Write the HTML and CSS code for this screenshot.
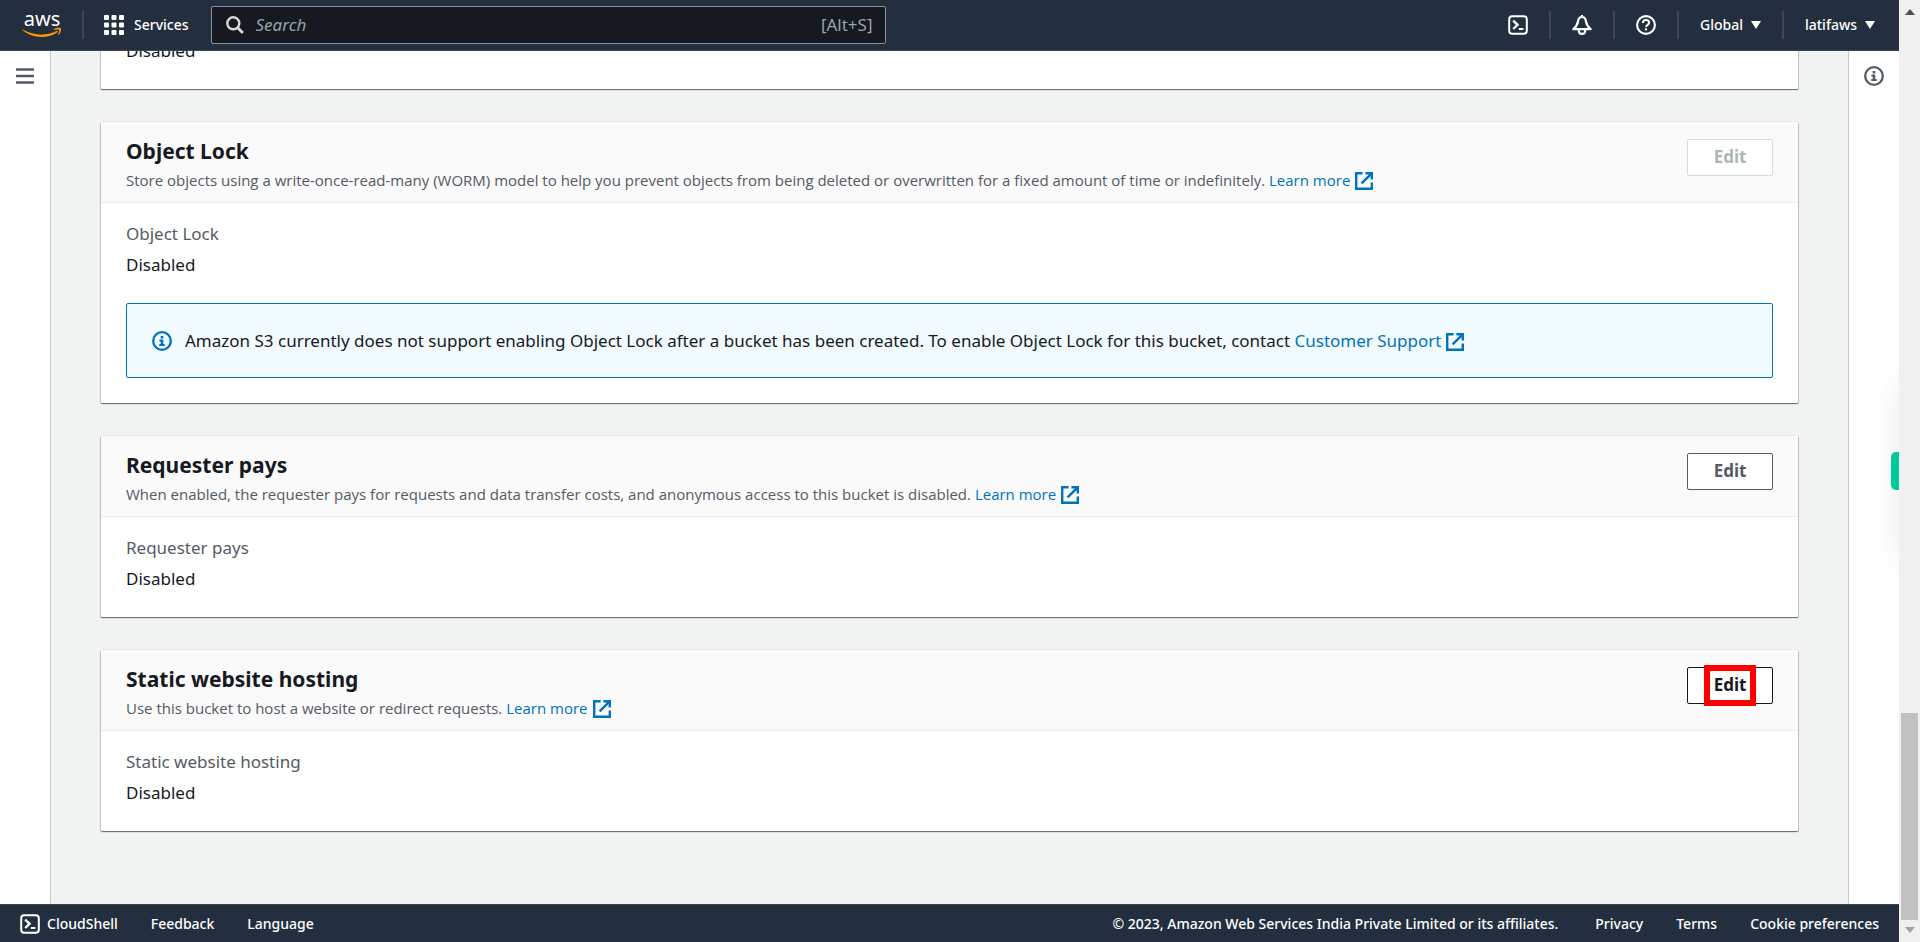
FILE: index.html
```
<!DOCTYPE html>
<html lang="en">
<head>
<meta charset="utf-8">
<title>S3 bucket properties</title>
<link rel="stylesheet" href="styles.css">
</head>
<body>
<svg class="sprite" aria-hidden="true">
  <symbol id="i-shell" viewBox="0 0 20 20"><rect x="1.2" y="1.2" width="17.6" height="17.6" rx="3" fill="none" stroke="currentColor" stroke-width="2"/><path d="M5.2 5.600 9.600 9.800 5.200 14" fill="none" stroke="currentColor" stroke-width="2.300"/><path d="M10.800 14h4.600" stroke="currentColor" stroke-width="2"/></symbol>
  <symbol id="i-ext" viewBox="0 0 18 18"><path d="M7.600 1.200H1.200v15.600h15.600v-6.200M10.400 1.200h6.400v6.400M16.200 1.800 6.600 11.400" fill="none" stroke="currentColor" stroke-width="2.400"/></symbol>
  <symbol id="i-info" viewBox="0 0 20 20"><circle cx="10" cy="10" r="8.800" fill="none" stroke="currentColor" stroke-width="2.300"/><path d="M8.700 5h2.600v2.400H8.700zM7.400 8.500h3.900v4.400h1.400v2H7.300v-2h1.400v-2.400H7.400z" fill="currentColor"/></symbol>
  <symbol id="i-caret" viewBox="0 0 10 8"><path d="M0 0h10L5 8z" fill="currentColor"/></symbol>
</svg>
<div class="app">
  <header class="topbar">
    <a class="logo" href="#" aria-label="AWS home">
      <svg width="40" height="28" viewBox="0 0 40 28"><text class="logo-text" x="20" y="15" text-anchor="middle">aws</text><path d="M.8 18.500c10.600 6.300 23 6.800 34 1.600.9-.4 1.600.6.8 1.200C26.500 27.800 10.500 28.200.4 19.100c-.4-.4 0-.9.4-.6z" fill="#f90"/><path d="M32.200 17.900c2.300-1.500 6.300-1.100 6.700-.5.500.6-.1 4.700-2.300 6.500-.4.300-.7.100-.5-.2.500-1.300 1.600-4 1.100-4.700-.5-.7-3.400-.3-4.700-.1-.4 0-.6-.7-.3-1z" fill="#f90"/></svg>
    </a>
    <span class="rule"></span>
    <button class="nav services"><svg width="20" height="20" viewBox="0 0 20 20" fill="currentColor"><rect width="5" height="5" rx="1"/><rect x="7.500" width="5" height="5" rx="1"/><rect x="15" width="5" height="5" rx="1"/><rect y="7.500" width="5" height="5" rx="1"/><rect x="7.500" y="7.500" width="5" height="5" rx="1"/><rect x="15" y="7.500" width="5" height="5" rx="1"/><rect y="15" width="5" height="5" rx="1"/><rect x="7.500" y="15" width="5" height="5" rx="1"/><rect x="15" y="15" width="5" height="5" rx="1"/></svg>Services</button>
    <label class="search">
      <svg width="18" height="18" viewBox="0 0 18 18" fill="none" stroke="#d5dbdb"><circle cx="7.300" cy="7.300" r="6" stroke-width="2.400"/><path d="m11.700 11.700 5.200 5.200" stroke-width="2.800"/></svg>
      <input type="search" placeholder="Search" aria-label="Search">
      <span>[Alt+S]</span>
    </label>
    <div class="tools">
      <button class="nav" aria-label="CloudShell"><svg width="20" height="20"><use href="#i-shell"/></svg></button>
      <span class="rule"></span>
      <button class="nav" aria-label="Notifications"><svg width="20" height="20" viewBox="0 0 20 20" fill="none" stroke="currentColor" stroke-width="2.200" stroke-linejoin="round"><path d="M10 2C7.500 2 6.300 4.200 6 6.500c-.4 3.300-2 5.300-4.700 7.700h17.400C16 11.800 14.400 9.800 14 6.500 13.700 4.200 12.500 2 10 2z"/><path d="M6.900 15v1.300c0 1.500 1.300 2.600 3.100 2.600s3.100-1.100 3.100-2.600V15M10 0v2"/></svg></button>
      <span class="rule"></span>
      <button class="nav" aria-label="Help"><svg width="20" height="20" viewBox="0 0 20 20" fill="none" stroke="currentColor"><circle cx="10" cy="10" r="8.900" stroke-width="2.100"/><path d="M6.900 8c0-1.900 1.300-3 3.100-3s3.100 1.100 3.100 2.700c0 2.100-3 2.200-3 4.300" stroke-width="2"/><path d="M10 13.300v2.100" stroke-width="2.200"/></svg></button>
      <span class="rule"></span>
      <button class="nav text">Global<svg width="10" height="8"><use href="#i-caret"/></svg></button>
      <span class="rule"></span>
      <button class="nav text">latifaws<svg width="10" height="8"><use href="#i-caret"/></svg></button>
    </div>
  </header>

  <div class="middle">
    <nav class="rail"><button class="rail-button" aria-label="Open navigation"><svg width="18" height="16" viewBox="0 0 18 16" stroke="currentColor" stroke-width="2.400"><path d="M0 1.500h18M0 8h18M0 14.500h18"/></svg></button></nav>
    <main class="content">
      <section class="panel">
        <p class="value">Disabled</p>
      </section>
      <section class="panel">
        <div class="panel-head">
          <div><h2>Object Lock</h2>
          <p>Store objects using a write-once-read-many (WORM) model to help you prevent objects from being deleted or overwritten for a fixed amount of time or indefinitely. <a href="#">Learn more<svg width="18" height="18"><use href="#i-ext"/></svg></a></p></div>
          <button class="edit" disabled>Edit</button>
        </div>
        <dl class="fields"><dt>Object Lock</dt><dd>Disabled</dd></dl>
        <div class="alert"><svg width="20" height="20"><use href="#i-info"/></svg>
          <p>Amazon S3 currently does not support enabling Object Lock after a bucket has been created. To enable Object Lock for this bucket, contact <a href="#">Customer Support<svg width="18" height="18"><use href="#i-ext"/></svg></a></p></div>
      </section>
      <section class="panel">
        <div class="panel-head">
          <div><h2>Requester pays</h2>
          <p>When enabled, the requester pays for requests and data transfer costs, and anonymous access to this bucket is disabled. <a href="#">Learn more<svg width="18" height="18"><use href="#i-ext"/></svg></a></p></div>
          <button class="edit">Edit</button>
        </div>
        <dl class="fields"><dt>Requester pays</dt><dd>Disabled</dd></dl>
      </section>
      <section class="panel">
        <div class="panel-head">
          <div><h2>Static website hosting</h2>
          <p>Use this bucket to host a website or redirect requests. <a href="#">Learn more<svg width="18" height="18"><use href="#i-ext"/></svg></a></p></div>
          <button class="edit marked">Edit</button>
        </div>
        <dl class="fields"><dt>Static website hosting</dt><dd>Disabled</dd></dl>
      </section>
    </main>
    <aside class="rail right"><button class="rail-button" aria-label="Info"><svg width="20" height="20"><use href="#i-info"/></svg></button><span class="side-shadow"></span><span class="side-tab"></span></aside>
  </div>

  <footer class="footer">
    <a class="shell" href="#"><svg width="20" height="20"><use href="#i-shell"/></svg>CloudShell</a>
    <a href="#">Feedback</a>
    <a href="#">Language</a>
    <span class="copyright">© 2023, Amazon Web Services India Private Limited or its affiliates.</span>
    <a href="#">Privacy</a>
    <a href="#">Terms</a>
    <a href="#">Cookie preferences</a>
  </footer>
</div>
<div class="scrollbar" aria-hidden="true">
  <svg width="10" height="6"><path d="M0 6h10L5 0z" fill="#505050"/></svg>
  <div class="track"><div class="thumb"></div></div>
  <svg width="10" height="6"><path d="M0 0h10L5 6z" fill="#a3a3a3"/></svg>
</div>
</body>
</html>
```
FILE: styles.css
```
* { box-sizing: border-box; }

body {
  margin: 0;
  height: 100vh;
  display: flex;
  overflow: hidden;
  background: #f2f3f3;
  color: #16191f;
  font: 400 17px/27px "Noto Sans", "Open Sans", sans-serif;
}

button, input { font: inherit; color: inherit; }
svg { flex: none; }
h2, p, dl, dd { margin: 0; }
.sprite { position: absolute; width: 0; height: 0; }

.app {
  flex: 1;
  min-width: 0;
  display: flex;
  flex-direction: column;
}

/* Top bar */
.topbar {
  display: flex;
  align-items: center;
  height: 51px;
  padding: 0 24px 0 22px;
  background: #232f3e;
  border-bottom: 1px solid #414750;
  color: #fff;
  font-size: 14px;
  line-height: 20px;
  font-weight: 500;
}
.logo { display: flex; }
.logo svg { overflow: visible; }
.logo-text {
  fill: #fff;
  font: 400 20px "Noto Sans", sans-serif;
}
.rule { width: 2px; height: 28px; background: #414750; }
.logo + .rule { margin-left: 20px; }
.nav {
  display: flex;
  align-items: center;
  padding: 0;
  border: 0;
  background: none;
  white-space: nowrap;
}
.services { gap: 10px; margin: 0 22px 0 20px; }
.search {
  display: flex;
  align-items: center;
  flex: 0 1 675px;
  min-width: 0;
  height: 38px;
  padding: 0 12px 0 14px;
  gap: 12px;
  background: #161920;
  border: 1px solid #879596;
  border-radius: 2px;
  color: #95a5a6;
  font-size: 17px;
  font-weight: 400;
}
.search input {
  flex: 1;
  min-width: 0;
  padding: 0;
  border: 0;
  outline: 0;
  background: none;
}
.search input::placeholder {
  color: #95a5a6;
  font-style: italic;
  opacity: 1;
}
.tools {
  display: flex;
  align-items: center;
  gap: 21px;
  margin-left: auto;
}
.text { gap: 8px; }

/* Page body */
.middle {
  flex: 1;
  min-height: 0;
  display: flex;
}
.rail {
  flex: none;
  width: 51px;
  padding-top: 12px;
  background: #fff;
  border-right: 1px solid #c3cacb;
}
.rail.right {
  position: relative;
  overflow: hidden;
  border-right: 0;
  border-left: 1px solid #c3cacb;
}
.rail-button {
  display: flex;
  align-items: center;
  justify-content: center;
  width: 100%;
  height: 26px;
  padding: 0;
  border: 0;
  background: none;
  color: #545b64;
}
.side-tab {
  position: absolute;
  right: 0;
  top: 401px;
  width: 8px;
  height: 38px;
  background: #00cc9b;
  border-radius: 5px 0 0 5px;
}
.side-shadow {
  position: absolute;
  left: 100%;
  top: 330px;
  width: 20px;
  height: 180px;
  box-shadow: 0 0 30px rgba(0, 0, 0, .09);
}
.content {
  flex: 1;
  min-width: 0;
  display: flex;
  flex-direction: column;
  justify-content: flex-end;
  gap: 33px;
  padding: 0 50px 73px;
  overflow: hidden;
}
.panel {
  flex: none;
  background: #fff;
  border-radius: 1px;
  padding-bottom: 25px;
  box-shadow: 0 1px 1px 0 rgba(0, 28, 36, .45), 0 0 1px 1px rgba(0, 28, 36, .05), 1px 1px 1px 0 rgba(0, 28, 36, .15), -1px 1px 1px 0 rgba(0, 28, 36, .15);
}
.panel-head {
  display: flex;
  justify-content: space-between;
  align-items: flex-start;
  padding: 14px 25px 10px;
  background: #fafafa;
  border-bottom: 1px solid #eaeded;
}
.panel-head h2 {
  margin-bottom: 2px;
  font-size: 21px;
  line-height: 30px;
  font-weight: 700;
}
.panel-head p {
  color: #545b64;
  font-family: "Open Sans", "Noto Sans", sans-serif;
  font-size: 15px;
  line-height: 24px;
}
a { color: inherit; text-decoration: none; }
.panel p a { color: #0073bb; }
.panel p a svg { margin-left: 5px; vertical-align: -4px; }
.edit {
  position: relative;
  flex: none;
  width: 86px;
  height: 37px;
  margin-top: 3px;
  padding: 0 0 2px;
  background: #fff;
  border: 1px solid #545b64;
  border-radius: 2px;
  color: #545b64;
  font-weight: 700;
}
.edit:disabled { border-color: #d5dbdb; color: #aab7b8; }
.edit.marked { border-color: #16191f; color: #16191f; }
.edit.marked::after {
  content: "";
  position: absolute;
  inset: -3px 16px;
  border: 6px solid #f00;
}
.value { padding: 0 25px; }
.fields { padding: 17px 25px 0; }
.fields dt { margin-bottom: 4px; color: #545b64; }
.alert {
  display: flex;
  align-items: center;
  gap: 13px;
  margin: 25px 25px 0;
  padding: 23px 25px;
  background: #f1faff;
  border: 1px solid #0073bb;
  border-radius: 2px;
}
.alert > svg { color: #0073bb; }

/* Footer */
.footer {
  display: flex;
  align-items: center;
  gap: 33px;
  height: 38px;
  padding: 0 20px;
  background: #232f3e;
  border-top: 1px solid #414750;
  color: #fff;
  font-size: 14px;
  line-height: 20px;
  font-weight: 500;
  white-space: nowrap;
}
.shell { display: flex; align-items: center; gap: 7px; }
.copyright { margin: 0 4px 0 auto; }

/* Window scrollbar */
.scrollbar {
  flex: none;
  width: 21px;
  display: flex;
  flex-direction: column;
  align-items: center;
  gap: 7px;
  padding: 9px 0;
  background: #f0f0f0;
}
.track {
  flex: 1;
  width: 17px;
  display: flex;
  align-items: flex-end;
}
.thumb { width: 100%; height: 23%; background: #c1c1c1; }
```
